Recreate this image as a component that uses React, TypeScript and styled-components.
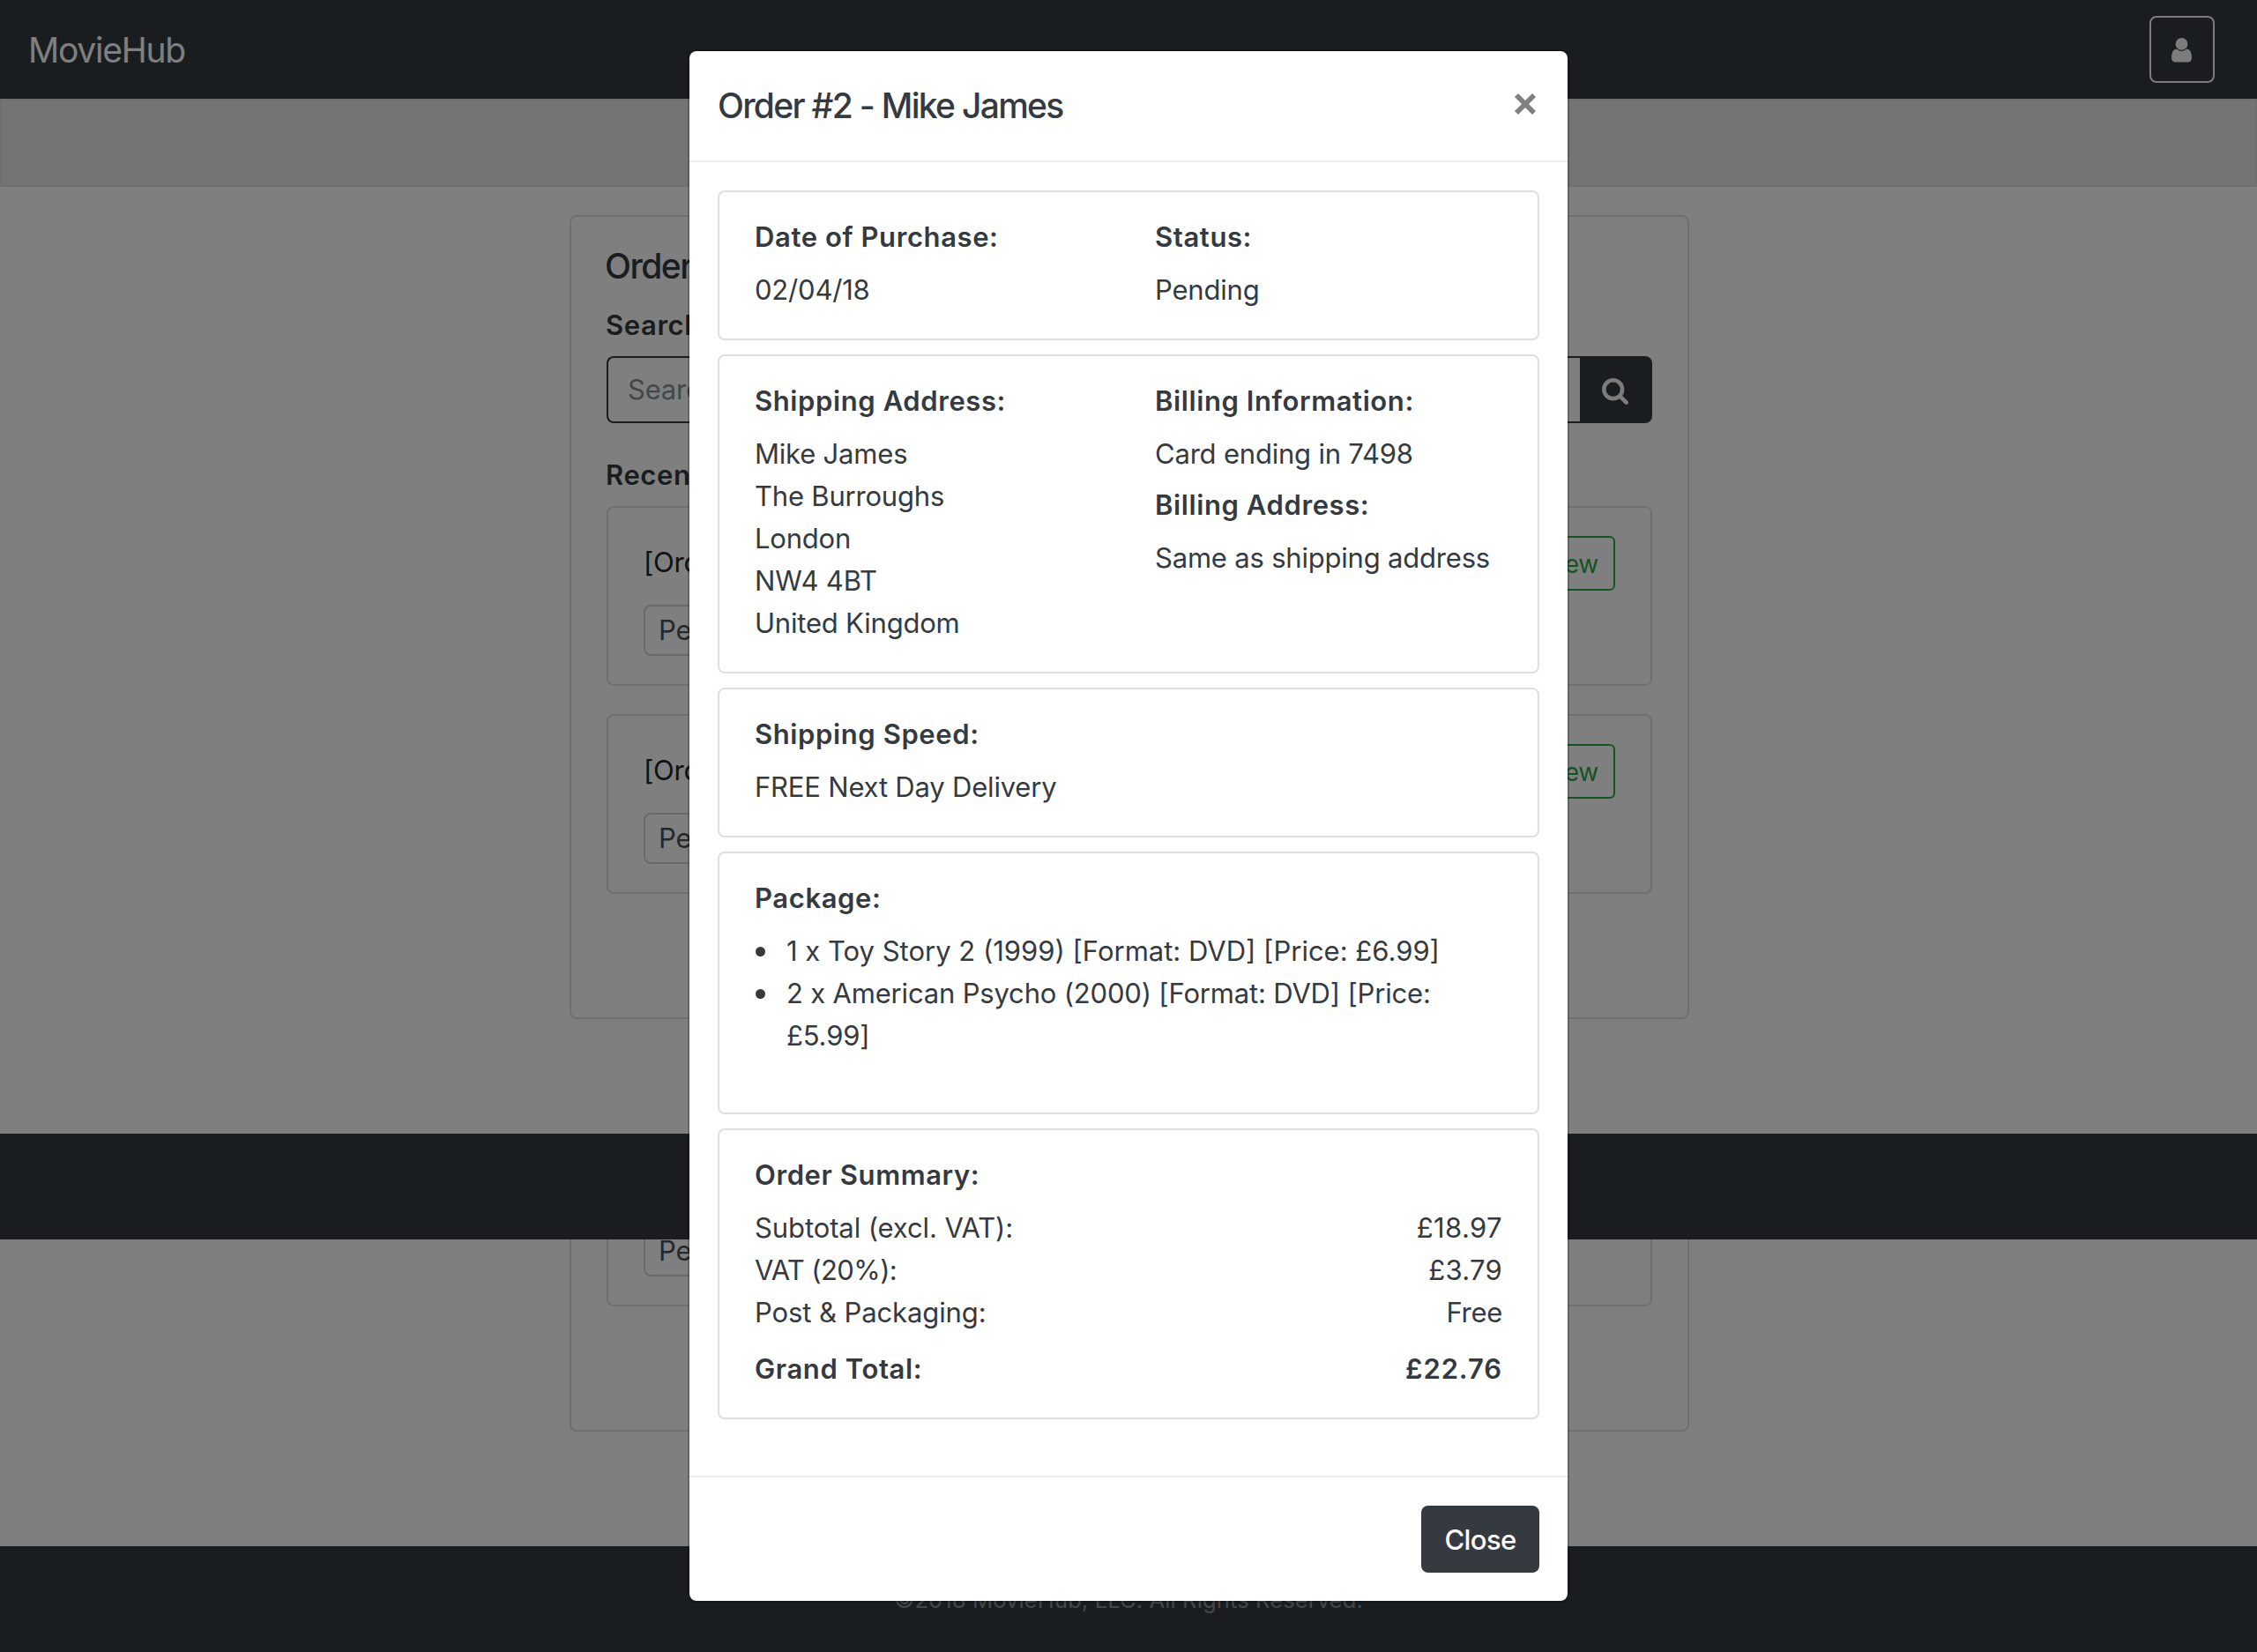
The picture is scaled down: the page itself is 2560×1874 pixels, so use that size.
import React from "react";
import styled, { createGlobalStyle, css } from "styled-components";

const ink = "#343a40";
const line = "rgba(0, 0, 0, 0.125)";

const GlobalStyle = createGlobalStyle`
  *, *::before, *::after { box-sizing: border-box; }
  html, body { margin: 0; padding: 0; }
  body {
    font-family: Inter, "Liberation Sans", sans-serif;
    font-size: 31px;
    line-height: 48px;
    color: ${ink};
    background: #fff;
    overflow: hidden;
  }
  h2, h3, p, ul { margin: 0; }
  button, input { font: inherit; letter-spacing: inherit; }
`;

const Page = styled.div`
  position: relative;
  height: 1874px;
  overflow: hidden;
  letter-spacing: -0.2px;
`;

const Navbar = styled.nav`
  height: 112px;
  padding: 0 48px 0 32px;
  display: flex;
  align-items: center;
  justify-content: space-between;
  background: ${ink};
`;

const Brand = styled.span`
  padding-top: 1px;
  font-size: 39px;
  line-height: 60px;
  letter-spacing: -1.25px;
  color: #fff;
`;

const UserButton = styled.button`
  width: 74px;
  height: 76px;
  padding: 2px 1px 0 0;
  display: flex;
  align-items: center;
  justify-content: center;
  background: transparent;
  color: #f8f9fa;
  border: 2px solid #f8f9fa;
  border-radius: 8px;
`;

const SubBar = styled.div`
  height: 100px;
  border: 2px solid #dfdfdf;
  background: #e8e8e8;
`;

const Panel = styled.section<{ $height: number }>`
  width: 1270px;
  height: ${(p) => p.$height}px;
  margin-left: 646px;
  padding: 32px 40px;
  display: flex;
  flex-direction: column;
  border: 2px solid ${line};
  border-radius: 8px;
  background: #fff;
`;

const Upper = styled.div`
  height: 1074px;
  padding-top: 32px;
`;

const Lower = styled.div`
  height: 348px;
`;

const LowerPanel = styled(Panel)`
  padding-top: 0;
  border-top: 0;
  border-radius: 0 0 8px 8px;
`;

const PanelTitle = styled.h2`
  margin-left: -2px;
  font-size: 39px;
  line-height: 48px;
  font-weight: 540;
  letter-spacing: -1.5px;
  color: ${ink};
`;

const PanelLabel = styled.h3<{ $gap: number }>`
  margin: ${(p) => p.$gap}px 0 0 -1px;
  font-size: 31px;
  line-height: 38px;
  font-weight: 560;
  letter-spacing: 0.6px;
  color: ${ink};
`;

const SearchRow = styled.div`
  display: flex;
  height: 76px;
  margin-top: 16px;
`;

const SearchInput = styled.input`
  flex: 1;
  min-width: 0;
  padding: 13px 22px;
  border: 2px solid ${ink};
  border-right: 0;
  border-radius: 8px 0 0 8px;
  background: #fff;
  &::placeholder { color: #868e96; opacity: 1; }
`;

const SearchButton = styled.button`
  width: 82px;
  padding: 4px 2px 0 0;
  display: flex;
  align-items: center;
  justify-content: center;
  border: 0;
  border-radius: 0 8px 8px 0;
  background: ${ink};
  color: #f8f9fa;
`;

const OrderCard = styled.article<{ $gap: number }>`
  height: 204px;
  flex: none;
  margin-top: ${(p) => p.$gap}px;
  padding: 32px 40px;
  display: flex;
  justify-content: space-between;
  align-items: flex-start;
  border: 2px solid ${line};
  border-radius: 8px;
`;

const OrderCardEnd = styled.article`
  height: 76px;
  padding: 0 40px;
  display: flex;
  align-items: flex-start;
  overflow: hidden;
  border: 2px solid ${line};
  border-top: 0;
  border-radius: 0 0 8px 8px;
`;

const OrderInfo = styled.div`
  display: flex;
  flex-direction: column;
  align-items: flex-start;
  padding-top: 6px;
  color: #212529;
`;

const StatusBox = styled.span<{ $top: number }>`
  height: 58px;
  margin-top: ${(p) => p.$top}px;
  padding: 0 15px;
  display: flex;
  align-items: center;
  border: 2px solid #ced4da;
  border-radius: 8px;
  color: #495057;
`;

const ViewButton = styled.button`
  height: 62px;
  padding: 2px 17px 0;
  border: 2px solid #28a745;
  border-radius: 6px;
  background: transparent;
  color: #28a745;
  font-size: 28px;
`;

const FooterBand = styled.footer`
  height: 120px;
  padding-top: 37px;
  display: flex;
  justify-content: center;
  background: ${ink};
  color: #868e96;
  font-size: 25.6px;
  letter-spacing: 0.08px;
`;

const Backdrop = styled.div`
  position: absolute;
  inset: 0;
  padding-top: 56px;
  display: flex;
  justify-content: center;
  align-items: flex-start;
  background: rgba(0, 0, 0, 0.5);
`;

const Dialog = styled.div`
  width: 1000px;
  border: 2px solid rgba(0, 0, 0, 0.2);
  border-radius: 10px;
  background: #fff;
  background-clip: padding-box;
`;

const DialogHeader = styled.header`
  height: 126px;
  padding: 32px;
  display: flex;
  justify-content: space-between;
  border-bottom: 2px solid #e9ecef;
`;

const DialogTitle = styled.h2`
  font-size: 39px;
  line-height: 60px;
  font-weight: 540;
  letter-spacing: -1.7px;
`;

const CloseMark = styled.button`
  width: 32px;
  height: 56px;
  padding: 0;
  display: flex;
  align-items: center;
  justify-content: center;
  border: 0;
  background: none;
`;

const DialogBody = styled.div`
  padding: 32px 32px 64px;
  display: flex;
  flex-direction: column;
  gap: 16px;
`;

const InfoCard = styled.section<{ $split?: boolean; $tail?: number }>`
  padding: 32px 40px ${(p) => 31 + (p.$tail ?? 0)}px;
  border: 2px solid #dfdfdf;
  border-radius: 8px;
  ${(p) =>
    p.$split &&
    css`
      display: grid;
      grid-template-columns: 1fr 1fr;
      column-gap: 60px;
    `}
`;

const Heading = styled.h3<{ $after?: boolean }>`
  margin: ${(p) => (p.$after ? 15 : 0)}px 0 17px;
  font-size: 31px;
  line-height: 38px;
  font-weight: 560;
  letter-spacing: 0.6px;
  white-space: nowrap;
`;

const Line = styled.p`
  white-space: nowrap;
`;

const ItemList = styled.ul`
  padding: 0;
  list-style: none;
`;

const Item = styled.li<{ $track: number }>`
  display: grid;
  grid-template-columns: 36px 1fr;
  letter-spacing: ${(p) => p.$track}px;
`;

const Bullet = styled.span`
  width: 11px;
  height: 11px;
  margin: 19px 0 0 1px;
  border-radius: 50%;
  background: ${ink};
`;

const SumRow = styled.div<{ $total?: boolean }>`
  display: flex;
  justify-content: space-between;
  ${(p) =>
    p.$total &&
    css`
      margin-top: 16px;
      font-weight: 560;
      letter-spacing: 0.6px;
    `}
`;

const SumLabel = styled.span<{ $track?: number }>`
  letter-spacing: ${(p) => (p.$track === undefined ? "inherit" : `${p.$track}px`)};
`;

const Amount = styled.span<{ $track: number }>`
  letter-spacing: ${(p) => p.$track}px;
`;

const DialogFooter = styled.footer`
  height: 142px;
  padding: 32px;
  display: flex;
  justify-content: flex-end;
  border-top: 2px solid #e9ecef;
`;

const CloseButton = styled.button`
  width: 134px;
  height: 76px;
  padding: 2px 0 0;
  border: 0;
  border-radius: 8px;
  background: ${ink};
  color: #fff;
  font-weight: 500;
  letter-spacing: -0.6px;
`;

const address = ["Mike James", "The Burroughs", "London", "NW4 4BT", "United Kingdom"];

const items = [
  { text: "1 x Toy Story 2 (1999) [Format: DVD] [Price: £6.99]", track: 0 },
  { text: "2 x American Psycho (2000) [Format: DVD] [Price: £5.99]", track: -0.18 },
];

const charges = [
  { label: "Subtotal (excl. VAT):", value: "£18.97", labelTrack: -0.1, track: 0.4 },
  { label: "VAT (20%):", value: "£3.79", labelTrack: -0.6, track: 0.3 },
  { label: "Post & Packaging:", value: "Free", labelTrack: -0.1, track: -0.3 },
];

function UserIcon() {
  return (
    <svg width="23" height="27.5" viewBox="0 0 1280 1536" fill="currentColor">
      <path d="M1280 1271q0 109-62.5 187t-150.5 78h-854q-88 0-150.5-78t-62.5-187q0-85 8.5-160.5t31.5-152 58.5-131 94-89 134.5-34.5q131 128 313 128t313-128q76 0 134.5 34.5t94 89 58.5 131 31.5 152 8.5 160.5zm-256-887q0 159-112.5 271.5t-271.5 112.5-271.5-112.5-112.5-271.5 112.5-271.5 271.5-112.5 271.5 112.5 112.5 271.5z" />
    </svg>
  );
}

function SearchIcon() {
  return (
    <svg width="30" height="30" viewBox="0 0 1664 1664" fill="currentColor">
      <path d="M1152 704q0-185-131.5-316.5t-316.5-131.5-316.5 131.5-131.5 316.5 131.5 316.5 316.5 131.5 316.5-131.5 131.5-316.5zm512 832q0 52-38 90t-90 38q-54 0-90-38l-343-342q-179 124-399 124-143 0-273.5-55.5t-225-150-150-225-55.5-273.5 55.5-273.5 150-225 225-150 273.5-55.5 273.5 55.5 225 150 150 225 55.5 273.5q0 220-124 399l343 343q37 37 37 90z" />
    </svg>
  );
}

function OrderEntry({ id, gap }: { id: number; gap: number }) {
  return (
    <OrderCard $gap={gap}>
      <OrderInfo>
        <span>[Order #{id}]</span>
        <StatusBox $top={24}>Pending</StatusBox>
      </OrderInfo>
      <ViewButton>View</ViewButton>
    </OrderCard>
  );
}

function OrderDialog() {
  return (
    <Dialog role="dialog" aria-modal="true">
      <DialogHeader>
        <DialogTitle>Order #2 - Mike James</DialogTitle>
        <CloseMark aria-label="Dismiss">
          <svg width="24" height="24" viewBox="0 0 24 24">
            <path d="M2 2L22 22M22 2L2 22" stroke="#808080" strokeWidth="5.66" />
          </svg>
        </CloseMark>
      </DialogHeader>
      <DialogBody>
        <InfoCard $split>
          <div>
            <Heading>Date of Purchase:</Heading>
            <Line>02/04/18</Line>
          </div>
          <div>
            <Heading>Status:</Heading>
            <Line>Pending</Line>
          </div>
        </InfoCard>
        <InfoCard $split>
          <div>
            <Heading>Shipping Address:</Heading>
            {address.map((part) => (
              <Line key={part}>{part}</Line>
            ))}
          </div>
          <div>
            <Heading>Billing Information:</Heading>
            <Line>Card ending in 7498</Line>
            <Heading $after>Billing Address:</Heading>
            <Line>Same as shipping address</Line>
          </div>
        </InfoCard>
        <InfoCard>
          <Heading>Shipping Speed:</Heading>
          <Line>FREE Next Day Delivery</Line>
        </InfoCard>
        <InfoCard $tail={32}>
          <Heading>Package:</Heading>
          <ItemList>
            {items.map((item) => (
              <Item key={item.text} $track={item.track}>
                <Bullet />
                <span>{item.text}</span>
              </Item>
            ))}
          </ItemList>
        </InfoCard>
        <InfoCard>
          <Heading>Order Summary:</Heading>
          {charges.map((c) => (
            <SumRow key={c.label}>
              <SumLabel $track={c.labelTrack}>{c.label}</SumLabel>
              <Amount $track={c.track}>{c.value}</Amount>
            </SumRow>
          ))}
          <SumRow $total>
            <SumLabel>Grand Total:</SumLabel>
            <Amount $track={0.9}>£22.76</Amount>
          </SumRow>
        </InfoCard>
      </DialogBody>
      <DialogFooter>
        <CloseButton>Close</CloseButton>
      </DialogFooter>
    </Dialog>
  );
}

export default function App() {
  return (
    <>
      <GlobalStyle />
      <Page>
        <Navbar>
          <Brand>MovieHub</Brand>
          <UserButton aria-label="Account">
            <UserIcon />
          </UserButton>
        </Navbar>
        <SubBar />
        <Upper>
          <Panel $height={912}>
            <PanelTitle>Orders</PanelTitle>
            <PanelLabel $gap={24}>Search</PanelLabel>
            <SearchRow>
              <SearchInput placeholder="Search" />
              <SearchButton aria-label="Search">
                <SearchIcon />
              </SearchButton>
            </SearchRow>
            <PanelLabel $gap={40}>Recent</PanelLabel>
            <OrderEntry id={2} gap={16} />
            <OrderEntry id={1} gap={32} />
          </Panel>
        </Upper>
        <FooterBand />
        <Lower>
          <LowerPanel $height={218}>
            <OrderCardEnd>
              <StatusBox $top={-16}>Pending</StatusBox>
            </OrderCardEnd>
          </LowerPanel>
        </Lower>
        <FooterBand>©2018 MovieHub, LLC. All Rights Reserved.</FooterBand>
        <Backdrop>
          <OrderDialog />
        </Backdrop>
      </Page>
    </>
  );
}
